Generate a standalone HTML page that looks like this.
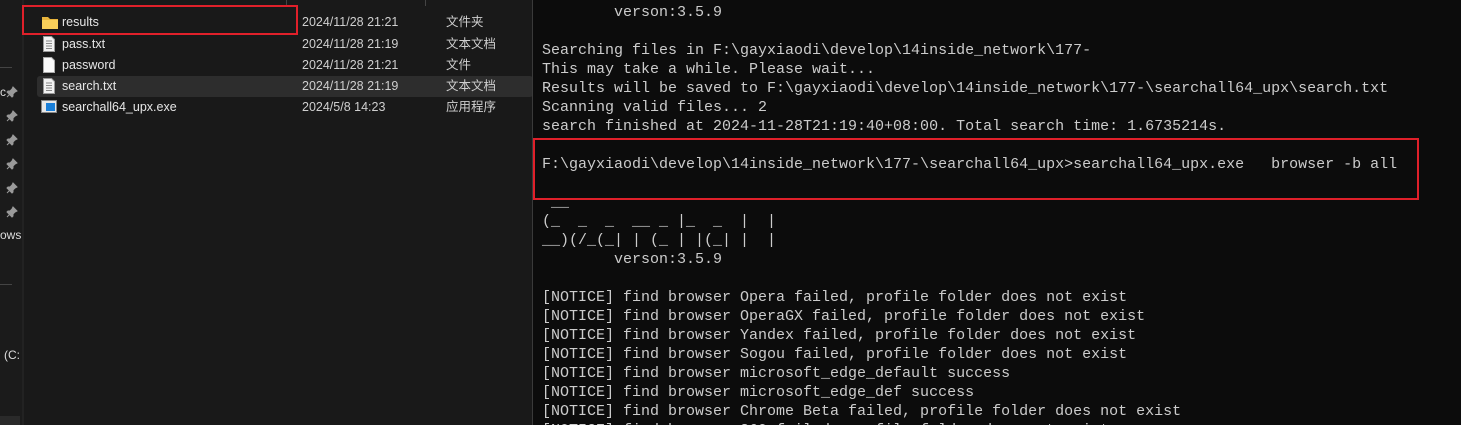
<!DOCTYPE html>
<html><head><meta charset="utf-8"><style>
*{margin:0;padding:0;box-sizing:border-box}
html,body{width:1461px;height:425px;overflow:hidden}
body{background:#191919;position:relative;font-family:"Liberation Sans","Noto Sans CJK SC",sans-serif}
.abs{position:absolute}
.row{position:absolute;left:37px;width:496px;height:21px;color:#e6e6e6;font-size:12.5px}
.row span{position:absolute;top:3px;line-height:15px;height:15px}
.n{left:25px}.d{left:265px;color:#cfcfcf}.t{left:409px;color:#cfcfcf}
.term{position:absolute;left:532px;top:0;width:929px;height:425px;background:#0c0c0c;border-left:1px solid #3a3a3a;overflow:hidden}
pre{position:absolute;left:9px;top:3px;font-family:"Liberation Mono",monospace;font-size:15px;line-height:19px;color:#cccccc;white-space:pre}
.pin{position:absolute;left:6px}
</style></head><body>
<div class="abs" style="left:0;top:0;width:22px;height:425px;background:#1b1b1b"></div>
<div class="abs" style="left:22px;top:0;width:2px;height:425px;background:#222"></div>
<div class="abs" style="left:0;top:67px;width:12px;height:1px;background:#444"></div>
<div class="abs" style="left:0;top:284px;width:12px;height:1px;background:#444"></div>
<div class="abs" style="left:0;top:416px;width:20px;height:9px;background:#2a2a2a"></div>
<div class="abs" style="left:286px;top:0;width:1px;height:6px;background:#444"></div>
<div class="abs" style="left:425px;top:0;width:1px;height:6px;background:#444"></div>
<div class="abs" style="left:0;top:85px;color:#ddd;font-size:12px;line-height:14px">c</div>
<svg class="pin" style="top:86px" width="12" height="12"><path d="M7 1l4 4-2 1-2 2 0 2-1 1-5-5 1-1 2 0 2-2z M3.5 8.5L1 11" fill="#9a9a9a" stroke="#9a9a9a" stroke-width="1"/></svg>
<svg class="pin" style="top:110px" width="12" height="12"><path d="M7 1l4 4-2 1-2 2 0 2-1 1-5-5 1-1 2 0 2-2z M3.5 8.5L1 11" fill="#9a9a9a" stroke="#9a9a9a" stroke-width="1"/></svg>
<svg class="pin" style="top:134px" width="12" height="12"><path d="M7 1l4 4-2 1-2 2 0 2-1 1-5-5 1-1 2 0 2-2z M3.5 8.5L1 11" fill="#9a9a9a" stroke="#9a9a9a" stroke-width="1"/></svg>
<svg class="pin" style="top:158px" width="12" height="12"><path d="M7 1l4 4-2 1-2 2 0 2-1 1-5-5 1-1 2 0 2-2z M3.5 8.5L1 11" fill="#9a9a9a" stroke="#9a9a9a" stroke-width="1"/></svg>
<svg class="pin" style="top:182px" width="12" height="12"><path d="M7 1l4 4-2 1-2 2 0 2-1 1-5-5 1-1 2 0 2-2z M3.5 8.5L1 11" fill="#9a9a9a" stroke="#9a9a9a" stroke-width="1"/></svg>
<svg class="pin" style="top:206px" width="12" height="12"><path d="M7 1l4 4-2 1-2 2 0 2-1 1-5-5 1-1 2 0 2-2z M3.5 8.5L1 11" fill="#9a9a9a" stroke="#9a9a9a" stroke-width="1"/></svg>
<div class="abs" style="left:0;top:228px;color:#ddd;font-size:12px;line-height:14px">ows</div>
<div class="abs" style="left:4px;top:348px;color:#ddd;font-size:12px;line-height:14px">(C:</div>

<div class="abs" style="left:37px;top:76px;width:496px;height:21px;background:#2d2d2d;border-radius:3px"></div>
<div class="row" style="top:12px"><svg class="abs" style="left:5px;top:3px" width="16" height="14"><path d="M0 2h6l2 2h8v10H0z" fill="#e8b43c"/><path d="M0 5h16v9H0z" fill="#f8cf5a"/></svg><span class="n">results</span><span class="d">2024/11/28 21:21</span><span class="t">文件夹</span></div>
<div class="row" style="top:34px"><svg class="abs" style="left:6px;top:2px" width="12" height="16"><path d="M0.5 .5h8l3 3v12h-11z" fill="#f2f2f2" stroke="#999"/><path d="M3 5h6M3 7.5h6M3 10h6M3 12.5h6" stroke="#888"/></svg><span class="n">pass.txt</span><span class="d">2024/11/28 21:19</span><span class="t">文本文档</span></div>
<div class="row" style="top:55px"><svg class="abs" style="left:6px;top:2px" width="12" height="16"><path d="M0.5 .5h8l3 3v12h-11z" fill="#fafafa" stroke="#aaa"/></svg><span class="n">password</span><span class="d">2024/11/28 21:21</span><span class="t">文件</span></div>
<div class="row" style="top:76px"><svg class="abs" style="left:6px;top:2px" width="12" height="16"><path d="M0.5 .5h8l3 3v12h-11z" fill="#f2f2f2" stroke="#999"/><path d="M3 5h6M3 7.5h6M3 10h6M3 12.5h6" stroke="#888"/></svg><span class="n">search.txt</span><span class="d">2024/11/28 21:19</span><span class="t">文本文档</span></div>
<div class="row" style="top:97px"><svg class="abs" style="left:4px;top:3px" width="16" height="13"><rect x=".5" y=".5" width="15" height="12" fill="#e8e8e8" stroke="#888"/><rect x="5" y="3" width="9" height="8" fill="#1a7fd8"/></svg><span class="n">searchall64_upx.exe</span><span class="d">2024/5/8 14:23</span><span class="t">应用程序</span></div>
<div class="abs" style="left:22px;top:5px;width:276px;height:30px;border:2px solid #e0202a"></div>

<div class="term"><pre>        verson:3.5.9

Searching files in F:\gayxiaodi\develop\14inside_network\177-
This may take a while. Please wait...
Results will be saved to F:\gayxiaodi\develop\14inside_network\177-\searchall64_upx\search.txt
Scanning valid files... 2
search finished at 2024-11-28T21:19:40+08:00. Total search time: 1.6735214s.

F:\gayxiaodi\develop\14inside_network\177-\searchall64_upx>searchall64_upx.exe   browser -b all

 __
(_  _  _  __ _ |_  _  |  |
__)(/_(_| | (_ | |(_| |  |
        verson:3.5.9

[NOTICE] find browser Opera failed, profile folder does not exist
[NOTICE] find browser OperaGX failed, profile folder does not exist
[NOTICE] find browser Yandex failed, profile folder does not exist
[NOTICE] find browser Sogou failed, profile folder does not exist
[NOTICE] find browser microsoft_edge_default success
[NOTICE] find browser microsoft_edge_def success
[NOTICE] find browser Chrome Beta failed, profile folder does not exist
[NOTICE] find browser 360 failed, profile folder does not exist</pre>
<div class="abs" style="left:0;top:138px;width:886px;height:62px;border:2px solid #e0202a"></div>
</div>
</body></html>
